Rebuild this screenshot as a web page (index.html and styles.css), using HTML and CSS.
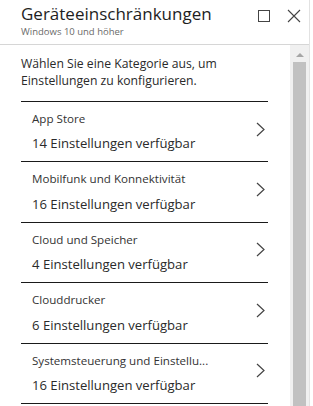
FILE: index.html
```html
<!DOCTYPE html>
<html lang="de">
<head>
<meta charset="utf-8">
<link rel="stylesheet" href="styles.css">
</head>
<body>
<div class="panel">
  <header class="header">
    <div class="titles">
      <div class="title">Geräteeinschränkungen</div>
      <div class="subtitle">Windows 10 und höher</div>
    </div>
    <div class="actions">
      <svg class="icon-max" width="12" height="12" viewBox="0 0 12 12"><rect x="0.5" y="0.5" width="11" height="11" fill="none" stroke="#444" stroke-width="1"/></svg>
      <svg class="icon-close" width="14" height="14" viewBox="0 0 14 14"><path d="M1 1 L13 13 M13 1 L1 13" stroke="#444" stroke-width="1.1" fill="none"/></svg>
    </div>
  </header>
  <div class="body">
    <div class="content">
      <p class="intro">Wählen Sie eine Kategorie aus, um Einstellungen zu konfigurieren.</p>
      <div class="list">
        <div class="row">
          <div class="texts"><div class="row-title">App Store</div><div class="row-sub">14 Einstellungen verfügbar</div></div>
          <svg class="chev" width="9" height="15" viewBox="0 0 9 15"><path d="M1 1 L8 7.5 L1 14" stroke="#444" stroke-width="1.2" fill="none"/></svg>
        </div>
        <div class="row">
          <div class="texts"><div class="row-title">Mobilfunk und Konnektivität</div><div class="row-sub">16 Einstellungen verfügbar</div></div>
          <svg class="chev" width="9" height="15" viewBox="0 0 9 15"><path d="M1 1 L8 7.5 L1 14" stroke="#444" stroke-width="1.2" fill="none"/></svg>
        </div>
        <div class="row">
          <div class="texts"><div class="row-title">Cloud und Speicher</div><div class="row-sub">4 Einstellungen verfügbar</div></div>
          <svg class="chev" width="9" height="15" viewBox="0 0 9 15"><path d="M1 1 L8 7.5 L1 14" stroke="#444" stroke-width="1.2" fill="none"/></svg>
        </div>
        <div class="row">
          <div class="texts"><div class="row-title">Clouddrucker</div><div class="row-sub">6 Einstellungen verfügbar</div></div>
          <svg class="chev" width="9" height="15" viewBox="0 0 9 15"><path d="M1 1 L8 7.5 L1 14" stroke="#444" stroke-width="1.2" fill="none"/></svg>
        </div>
        <div class="row">
          <div class="texts"><div class="row-title">Systemsteuerung und Einstellu...</div><div class="row-sub">16 Einstellungen verfügbar</div></div>
          <svg class="chev" width="9" height="15" viewBox="0 0 9 15"><path d="M1 1 L8 7.5 L1 14" stroke="#444" stroke-width="1.2" fill="none"/></svg>
        </div>
        <div class="row last"></div>
      </div>
    </div>
    <div class="scrollbar">
      <div class="arrow"></div>
      <div class="thumb"></div>
    </div>
  </div>
</div>
</body>
</html>
```
FILE: styles.css
```css
* { box-sizing: border-box; }
html, body { margin: 0; padding: 0; background: #fff; }
body { width: 313px; height: 406px; overflow: hidden; font-family: "Open Sans", "Noto Sans", sans-serif; color: #252525; }
.panel { width: 310px; height: 406px; border-right: 1px solid #e2e2e2; display: flex; flex-direction: column; overflow: hidden; }
.header { height: 45px; flex: none; border-bottom: 1px solid #d6d6d6; padding-left: 21px; display: flex; justify-content: space-between; }
.titles { padding-top: 3px; }
.title { font-size: 17px; line-height: 22px; color: #1e1e1e; }
.subtitle { font-size: 9.5px; line-height: 12px; color: #6a6a6a; margin-top: 1px; }
.actions { display: flex; gap: 17px; padding-top: 9px; padding-right: 8px; }
.icon-max { margin-top: 1px; }
.body { flex: 1; display: flex; min-height: 0; overflow: hidden; }
.content { flex: 1; padding-left: 21px; padding-right: 22px; overflow: hidden; }
.intro { margin: 10px 0 12px; font-size: 12.2px; line-height: 17px; color: #2a2a2a; width: 240px; }
.list { width: 247px; }
.row { height: 60.4px; border-top: 1px solid #1a1a1a; display: flex; align-items: center; justify-content: space-between; padding-left: 11px; padding-right: 3px; }
.row.last { height: 10px; }
.row-title { font-size: 11.6px; line-height: 15px; color: #333; white-space: nowrap; }
.row-sub { font-size: 13.1px; line-height: 18px; color: #2a2a2a; margin-top: 8.5px; white-space: nowrap; }
.chev { margin-top: -5px; flex: none; }
.scrollbar { width: 19px; flex: none; background: #f0f0f0; display: flex; flex-direction: column; align-items: center; padding-top: 8px; }
.arrow { width: 0; height: 0; border-left: 4px solid transparent; border-right: 4px solid transparent; border-bottom: 4px solid #a6a6a6; }
.thumb { width: 13px; flex: 1; background: #c1c1c1; margin-top: 5px; }
```
